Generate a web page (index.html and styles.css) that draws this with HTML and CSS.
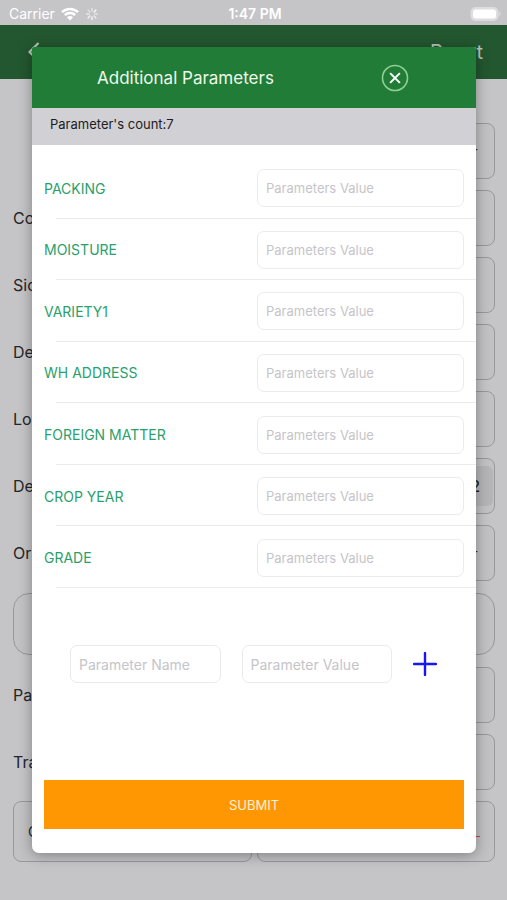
FILE: index.html
```html
<!DOCTYPE html>
<html lang="en">
<head>
<meta charset="utf-8">
<meta name="viewport" content="width=device-width, initial-scale=1">
<title>Additional Parameters</title>
<link rel="stylesheet" href="styles.css">
</head>
<body>
<div class="screen">
  <header class="status">
    <div class="status-left">
      <span>Carrier</span>
      <svg class="wifi" viewBox="0 0 18 14" aria-hidden="true">
        <path d="M1 5.2a11.5 11.5 0 0 1 16 0M3.8 8.1a7.5 7.5 0 0 1 10.4 0" fill="none" stroke="#fff" stroke-width="2.5"/>
        <path d="M9 13.4 5.9 10.3a4.4 4.4 0 0 1 6.2 0z" fill="#fff"/>
      </svg>
      <svg class="spinner" viewBox="0 0 14 14" aria-hidden="true">
        <g stroke="#fff" stroke-width="1.4" stroke-linecap="round">
          <path d="M7 1.5v2.6" opacity=".55"/><path d="M10.9 3.1 9.1 4.9" opacity=".9"/><path d="M12.5 7H9.9" opacity=".5"/><path d="M10.9 10.9 9.1 9.1" opacity=".7"/>
          <path d="M7 12.5V9.9" opacity=".9"/><path d="M3.1 10.9l1.8-1.8" opacity=".8"/><path d="M1.5 7h2.6" opacity=".6"/><path d="M3.1 3.1l1.8 1.8" opacity=".5"/>
        </g>
      </svg>
    </div>
    <strong class="clock">1:47 PM</strong>
    <svg class="battery" viewBox="0 0 31 16" aria-hidden="true">
      <rect x="0.5" y="1" width="28" height="14" rx="5" fill="#dddcde"/>
      <rect x="3" y="3.5" width="23" height="9" rx="2.5" fill="#fff"/>
      <path d="M29.3 5.8v4.4q1.4-.7 1.4-2.2t-1.4-2.2z" fill="#dddcde"/>
    </svg>
  </header>
  <nav class="nav">
    <a class="back" href="#" aria-label="Back">
      <svg viewBox="0 0 12 20" aria-hidden="true"><path d="M10.5 1 1.5 10l9 9" fill="none" stroke="#b9c4bb" stroke-width="2.2"/></svg>
    </a>
    <a class="reset" href="#">Reset</a>
  </nav>
  <main class="form">
    <div class="row"><span></span><div class="box picker"><i class="arrow"></i></div></div>
    <div class="row"><span>Co.</span><div class="box"></div></div>
    <div class="row"><span>Sid</span><div class="box"></div></div>
    <div class="row"><span>Del</span><div class="box"></div></div>
    <div class="row"><span>Lo.</span><div class="box"></div></div>
    <div class="row"><span>Del</span><div class="box segment"><div class="segment-on">2</div></div></div>
    <div class="row"><span>Ori</span><div class="box picker"><i class="arrow"></i></div></div>
    <div class="box note"></div>
    <div class="row"><span>Pa.</span><div class="box"></div></div>
    <div class="row"><span>Tra</span><div class="box"></div></div>
    <div class="actions">
      <div class="box action">O</div>
      <div class="box action end"><i class="dash"></i></div>
    </div>
  </main>

  <section class="modal" role="dialog" aria-labelledby="title">
    <header class="modal-head">
      <h1 id="title">Additional Parameters</h1>
      <button class="close" type="button" aria-label="Close">
        <svg viewBox="0 0 28 28" aria-hidden="true">
          <circle cx="14" cy="14" r="12.5" fill="none" stroke="#8fce95" stroke-width="1.6"/>
          <path d="M9.1 9.1l9.8 9.8M18.9 9.1l-9.8 9.800" stroke="#fff" stroke-width="2"/>
        </svg>
      </button>
    </header>
    <p class="count">Parameter's count:7</p>
    <form class="modal-body">
      <div class="params">
        <div class="param"><label for="p1">PACKING</label><input id="p1" type="text" placeholder="Parameters Value"></div>
        <div class="param"><label for="p2">MOISTURE</label><input id="p2" type="text" placeholder="Parameters Value"></div>
        <div class="param"><label for="p3">VARIETY1</label><input id="p3" type="text" placeholder="Parameters Value"></div>
        <div class="param"><label for="p4">WH ADDRESS</label><input id="p4" type="text" placeholder="Parameters Value"></div>
        <div class="param"><label for="p5">FOREIGN MATTER</label><input id="p5" type="text" placeholder="Parameters Value"></div>
        <div class="param"><label for="p6">CROP YEAR</label><input id="p6" type="text" placeholder="Parameters Value"></div>
        <div class="param"><label for="p7">GRADE</label><input id="p7" type="text" placeholder="Parameters Value"></div>
      </div>
      <div class="add">
        <input type="text" aria-label="Parameter Name" placeholder="Parameter Name">
        <input type="text" aria-label="Parameter Value" placeholder="Parameter Value">
        <button class="plus" type="button" aria-label="Add parameter">
          <svg viewBox="0 0 24 24" aria-hidden="true"><path d="M12 1v22M1 12h22" stroke="#1a16f5" stroke-width="2.4" stroke-linecap="round"/></svg>
        </button>
      </div>
      <button class="submit" type="submit">SUBMIT</button>
    </form>
  </section>
</div>
</body>
</html>
```
FILE: styles.css
```css
* { box-sizing: border-box; }

body {
  margin: 0;
  background: #c5c4c7;
  color: #252528;
  font-family: Inter, "Liberation Sans", sans-serif;
  font-size: 14px;
}

button { border: 0; padding: 0; background: none; font: inherit; cursor: pointer; }
svg { display: block; }

.screen { position: relative; min-height: 100vh; overflow: hidden; }

/* Status bar */
.status {
  display: grid;
  grid-template-columns: 1fr auto 1fr;
  align-items: center;
  height: 25px;
  padding: 2px 6px 0 9px;
  color: #fff;
}
.status-left { display: flex; align-items: center; gap: 6px; }
.wifi { width: 18px; height: 14px; }
.spinner { width: 14px; height: 14px; }
.clock { font-weight: 600; }
.battery { width: 31px; height: 16px; justify-self: end; }

/* Navigation bar */
.nav {
  display: flex;
  align-items: center;
  justify-content: space-between;
  height: 54px;
  padding: 0 24px 0 28px;
  background: #235730;
}
.back svg { width: 12px; height: 20px; }
.reset { color: #b9c4bb; font-size: 20px; text-decoration: none; }

/* Form behind the dialog */
.form { display: grid; gap: 11px; padding: 44px 12px 38px 13px; font-size: 16px; }
.row { display: grid; grid-template-columns: 1fr 1fr; align-items: center; }
.box { height: 56px; border: 1px solid #99989b; border-radius: 8px; background: #c2c1c4; }
.note { height: 62px; margin: 1px 0; border-radius: 16px; }
.picker { display: flex; align-items: center; justify-content: flex-end; padding-right: 16px; }
.arrow { border: 5px solid transparent; border-bottom: 0; border-top: 4px solid #252528; }
.segment { padding: 7px 1px; }
.segment-on {
  height: 40px;
  padding-right: 13px;
  border-radius: 6px;
  background: #b5b4b7;
  font-weight: 500;
  line-height: 40px;
  text-align: right;
}
.actions { display: grid; grid-template-columns: 1fr 1fr; gap: 5px; }
.action { height: 61px; padding-left: 14px; font-size: 14px; line-height: 59px; }
.end { display: flex; align-items: center; justify-content: flex-end; padding: 9px 14px 0 0; }
.dash { width: 10px; height: 1px; background: #cf4a33; }

/* Dialog */
.modal {
  position: absolute;
  top: 47px;
  left: 32px;
  right: 31px;
  overflow: hidden;
  border-radius: 2px 2px 7px 7px;
  background: #fff;
  box-shadow: 0 2px 14px rgba(0, 0, 0, 0.35);
}
.modal-head {
  display: flex;
  align-items: center;
  justify-content: space-between;
  height: 61px;
  padding: 0 67px 0 65px;
  background: #217c38;
  color: #eef8e8;
}
.modal-head h1 { margin: 0; font-size: 17px; font-weight: 400; }
.close svg { width: 28px; height: 28px; }
.count {
  height: 37px;
  margin: 0;
  padding: 0 18px;
  background: #d1d0d5;
  color: #1c1c1e;
  font-size: 13px;
  line-height: 32px;
}
.modal-body { padding: 12px 0 24px; }

.params { display: grid; grid-auto-rows: 1fr; min-height: 431px; }
.param {
  display: grid;
  grid-template-columns: 1fr 207px;
  align-items: center;
  padding: 1px 12px 0;
  background: linear-gradient(#ececee, #ececee) 24px 100% / 100% 1px no-repeat;
}
.param label { color: #2aa06c; }

input {
  width: 100%;
  min-width: 0;
  height: 38px;
  padding: 0 8px;
  border: 1px solid #ebebec;
  border-radius: 7px;
  background: #fff;
  color: #252528;
  font: inherit;
}
input::placeholder { color: #c5c5c8; opacity: 1; }
.param input { font-size: 13px; }

.add { display: flex; align-items: center; gap: 21px; padding: 57px 39px 97px 38px; }
.add input { flex: 1; }
.plus svg { width: 24px; height: 24px; }

.submit {
  display: block;
  width: calc(100% - 24px);
  height: 49px;
  margin: 0 12px;
  background: #ff9702;
  color: #fff3d9;
  font-size: 13px;
}
```
